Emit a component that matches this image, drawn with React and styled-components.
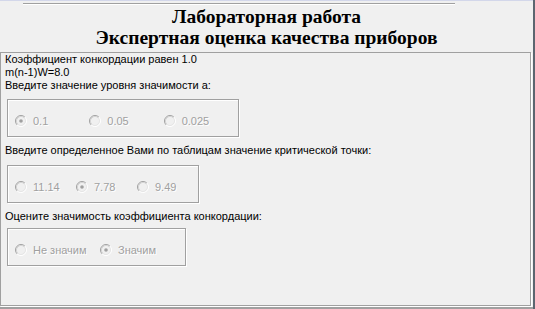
import React from 'react'
import styled, { createGlobalStyle } from 'styled-components'

const Global = createGlobalStyle`
    html, body {
        margin: 0;
        padding: 0;
        background: #f0f0f0;
    }
    body {
        font-family: "Liberation Sans", Arial, sans-serif;
        font-size: 11px;
        color: #000;
    }
`

const Window = styled.div`
    width: 535px;
    height: 309px;
    display: flex;
    overflow: hidden;
`
const Client = styled.div`
    width: 533px;
    display: flex;
    flex-direction: column;
    border-top: 1px solid #d3d7ea;
    box-sizing: border-box;
`
const Edge = styled.div`
    width: 2px;
    background: #5c6670;
`
const Divider = styled.div`
    margin: 2px 0 0 23px;
    width: 432px;
    border-top: 1px solid #a0a0a0;
    border-bottom: 1px solid #fff;
`
const Title = styled.h1`
    margin: 0;
    padding-top: 1px;
    font-family: "Liberation Serif", "Times New Roman", serif;
    font-weight: bold;
    font-size: 19.5px;
    line-height: 21px;
    text-align: center;
`
const Panel = styled.section`
    margin-top: 4px;
    width: 531px;
    height: 254px;
    box-sizing: border-box;
    border: 1px solid #a0a0a0;
    box-shadow: 1px 1px 0 #fff;
    padding: 0 0 0 4px;
    display: flex;
    flex-direction: column;
`
const Line = styled.div`
    line-height: 13px;
    white-space: nowrap;
    margin-top: ${p => p.gap || 0}px;
`
const Group = styled.div`
    margin: ${p => p.top}px 0 0 2px;
    width: ${p => p.width}px;
    height: 38px;
    box-sizing: border-box;
    border: 1px solid #a0a0a0;
    box-shadow: inset 1px 1px 0 #fff, 1px 1px 0 #fff;
    padding: 14px 0 0 7px;
    display: grid;
    grid-template-columns: repeat(${p => p.cols}, 1fr);
    align-items: start;
`
const Option = styled.label`
    display: flex;
    align-items: center;
    gap: 6px;
    height: 13px;
    color: #a0a0a0;
    text-shadow: 1px 1px 0 #fff;
    white-space: nowrap;
`
const Bottom = styled.div`
    margin-top: 1px;
    height: 2px;
    background: #a0a0a0;
`

function Radio({ checked }) {
    return (
        <svg width="12" height="12" viewBox="0 0 12 12">
            <circle cx="6" cy="6" r="5" fill="#f0f0f0" />
            <path d="M2.11 9.89 A5.5 5.5 0 0 1 9.89 2.11" stroke="#a0a0a0" strokeWidth="1" fill="none" />
            <path d="M9.89 2.11 A5.5 5.5 0 0 1 2.11 9.89" stroke="#ffffff" strokeWidth="1" fill="none" />
            <path d="M2.82 9.18 A4.5 4.5 0 0 1 9.18 2.82" stroke="#d4d4d4" strokeWidth="1" fill="none" />
            <path d="M9.18 2.82 A4.5 4.5 0 0 1 2.82 9.18" stroke="#e6e6e6" strokeWidth="1" fill="none" />
            {checked && <circle cx="6" cy="6" r="1.8" fill="#a0a0a0" />}
        </svg>
    )
}

function RadioGroup({ items, checked, width, top }) {
    return (
        <Group width={width} top={top} cols={items.length}>
            {items.map(item => (
                <Option key={item}>
                    <Radio checked={item === checked} />
                    {item}
                </Option>
            ))}
        </Group>
    )
}

export default function App() {
    return (
        <Window>
            <Global />
            <Client>
                <Divider />
                <Title>
                    Лабораторная работа<br />
                    Экспертная оценка качества приборов
                </Title>
                <Panel>
                    <Line>Коэффициент конкордации равен 1.0</Line>
                    <Line>m(n-1)W=8.0</Line>
                    <Line>Введите значение уровня значимости a:</Line>
                    <RadioGroup top={7} width={232} items={['0.1', '0.05', '0.025']} checked="0.1" />
                    <Line gap={7}>Введите определенное Вами по таблицам значение критической точки:</Line>
                    <RadioGroup top={8} width={192} items={['11.14', '7.78', '9.49']} checked="7.78" />
                    <Line gap={7}>Оцените значимость коэффициента конкордации:</Line>
                    <RadioGroup top={5} width={179} items={['Не значим', 'Значим']} checked="Значим" />
                </Panel>
                <Bottom />
            </Client>
            <Edge />
        </Window>
    )
}
